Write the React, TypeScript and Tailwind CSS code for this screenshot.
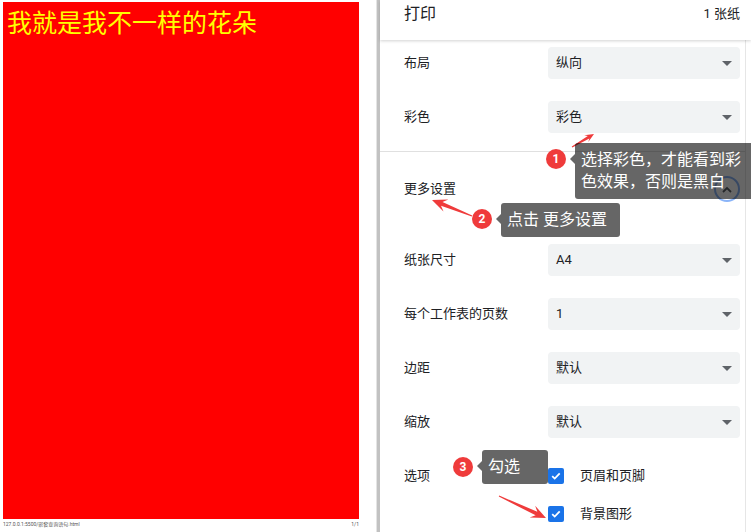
const FONT = "font-['Roboto','Noto_Sans_CJK_SC',sans-serif]"

type Pt = [number, number]

// tapered red annotation arrow, from tail to tip
function arrowPoints(tail: Pt, tip: Pt, headLen: number, headW: number, shaftW: number) {
  const dx = tip[0] - tail[0]
  const dy = tip[1] - tail[1]
  const len = Math.hypot(dx, dy)
  const ux = dx / len
  const uy = dy / len
  const nx = -uy
  const ny = ux
  const at = (back: number, side: number): string =>
    `${tip[0] - ux * back + nx * side},${tip[1] - uy * back + ny * side}`
  return [
    `${tail[0] + nx * 0.5},${tail[1] + ny * 0.5}`,
    at(headLen * 0.7, shaftW / 2),
    at(headLen, headW / 2),
    `${tip[0]},${tip[1]}`,
    at(headLen, -headW / 2),
    at(headLen * 0.7, -shaftW / 2),
    `${tail[0] - nx * 0.5},${tail[1] - ny * 0.5}`,
  ].join(' ')
}

function Caret() {
  return (
    <svg width="10" height="5" viewBox="0 0 10 5" className="shrink-0">
      <path d="M0 0h10L5 5z" fill="#5f6368" />
    </svg>
  )
}

function SelectRow({ label, value }: { label: string; value: string }) {
  return (
    <div className="flex h-[32px] items-center">
      <div className="w-[144px] text-[13px] text-[#202124]">{label}</div>
      <div className="flex h-[32px] w-[192px] items-center justify-between rounded-[4px] bg-[#f1f3f4] pl-[8px] pr-[8px]">
        <span className="text-[13px] text-[#202124]">{value}</span>
        <Caret />
      </div>
    </div>
  )
}

function Check({ label }: { label: string }) {
  return (
    <div className="flex h-[16px] items-center">
      <div className="flex h-[16px] w-[16px] items-center justify-center rounded-[2px] bg-[#1a73e8]">
        <svg width="12" height="12" viewBox="0 0 12 12">
          <path d="M2.2 6.2l2.5 2.4 5-5.2" fill="none" stroke="#fff" strokeWidth="1.8" />
        </svg>
      </div>
      <span className="ml-[16px] text-[13px] text-[#202124]">{label}</span>
    </div>
  )
}

function Badge({ n, x, y }: { n: number; x: number; y: number }) {
  return (
    <div
      className="absolute flex h-[20px] w-[20px] items-center justify-center rounded-full bg-[#ef3b3b] text-[12px] font-bold text-white"
      style={{ left: x - 10, top: y - 10 }}
    >
      {n}
    </div>
  )
}

function Tip({ x, y, w, children }: { x: number; y: number; w: number; children: React.ReactNode }) {
  return (
    <div className="absolute" style={{ left: x, top: y, width: w }}>
      <div className="absolute left-[-5px] top-[11px] h-0 w-0 border-y-[5px] border-r-[5px] border-y-transparent border-r-[rgba(0,0,0,0.6)]" />
      <div className="whitespace-nowrap rounded-[3px] bg-[rgba(0,0,0,0.6)] px-[6px] text-[16px] text-white">
        {children}
      </div>
    </div>
  )
}

export default function App() {
  return (
    <div className={`relative flex h-[532px] w-[751px] overflow-hidden bg-white ${FONT}`}>
      {/* print preview page */}
      <div className="flex w-[376px] flex-col pl-[3px] pr-[17px] pt-[2px]">
        <div className="h-[517px] bg-[#ff0000] pl-[4px] pt-[7px]">
          <div className="text-[25px] leading-[30px] text-[#ffff00]">我就是我不一样的花朵</div>
        </div>
        <div className="flex justify-between pt-[2px] text-[5px] leading-[7px] text-[#555]">
          <span>127.0.0.1:5500/嵌套查询语句.html</span>
          <span>1/1</span>
        </div>
      </div>

      <div className="flex w-[4px]">
        <div className="w-[1px] bg-[#e4e4e4]" />
        <div className="w-[3px] bg-[#c2c2c2]" />
      </div>

      {/* settings sidebar */}
      <div className="flex flex-1 flex-col">
        <div className="relative z-10 flex h-[40px] items-start justify-between pl-[24px] pr-[11px] pt-[3px] shadow-[0_1px_3px_rgba(0,0,0,0.18)]">
          <span className="text-[16px] leading-[22px] text-[#202124]">打印</span>
          <span className="pt-[2px] text-[13px] leading-[18px] text-[#202124]">1 张纸</span>
        </div>
        <div className="flex flex-1">
          <div className="flex flex-1 flex-col">
            <div className="flex flex-col gap-[22px] border-b border-[#e0e0e0] pb-[18px] pl-[24px] pt-[7px]">
              <SelectRow label="布局" value="纵向" />
              <SelectRow label="彩色" value="彩色" />
            </div>
            <div className="mt-[21px] flex h-[32px] items-center justify-between pl-[24px] pr-[5px]">
              <span className="text-[13px] text-[#202124]">更多设置</span>
              <div className="flex h-[26px] w-[26px] items-center justify-center rounded-full border-2 border-[#8ab4f8]">
                <svg width="10" height="7" viewBox="0 0 10 7">
                  <path d="M1 6l4-4 4 4" fill="none" stroke="#5f6368" strokeWidth="1.8" />
                </svg>
              </div>
            </div>
            <div className="mt-[39px] flex flex-col gap-[22px] pl-[24px]">
              <SelectRow label="纸张尺寸" value="A4" />
              <SelectRow label="每个工作表的页数" value="1" />
              <SelectRow label="边距" value="默认" />
              <SelectRow label="缩放" value="默认" />
            </div>
            <div className="mt-[30px] flex pl-[24px]">
              <div className="flex h-[16px] w-[144px] items-center text-[13px] text-[#202124]">选项</div>
              <div className="flex flex-col gap-[22px]">
                <Check label="页眉和页脚" />
                <Check label="背景图形" />
              </div>
            </div>
          </div>
          <div className="w-[6px] border-l border-[#e6e6e6]" />
        </div>
      </div>

      {/* annotations */}
      <svg className="pointer-events-none absolute left-0 top-0" width="751" height="532">
        <polygon points={arrowPoints([572, 147], [594, 134], 9, 8, 3)} fill="#ef3b3b" />
        <polygon points={arrowPoints([472, 216], [432, 200], 15, 13, 4)} fill="#ef3b3b" />
        <polygon points={arrowPoints([499, 496], [546, 518], 15, 13, 4)} fill="#ef3b3b" />
      </svg>

      <Tip x={575} y={143} w={190}>
        <div className="pb-[6px] pt-[6px] leading-[22px]">
          选择彩色，才能看到彩
          <br />
          色效果，否则是黑白
        </div>
      </Tip>
      <Badge n={1} x={556} y={159} />

      <Tip x={501} y={203} w={119}>
        <div className="leading-[34px]">点击 更多设置</div>
      </Tip>
      <Badge n={2} x={482} y={219} />

      <Tip x={482} y={450} w={66}>
        <div className="leading-[34px]">勾选</div>
      </Tip>
      <Badge n={3} x={463} y={467} />
    </div>
  )
}
